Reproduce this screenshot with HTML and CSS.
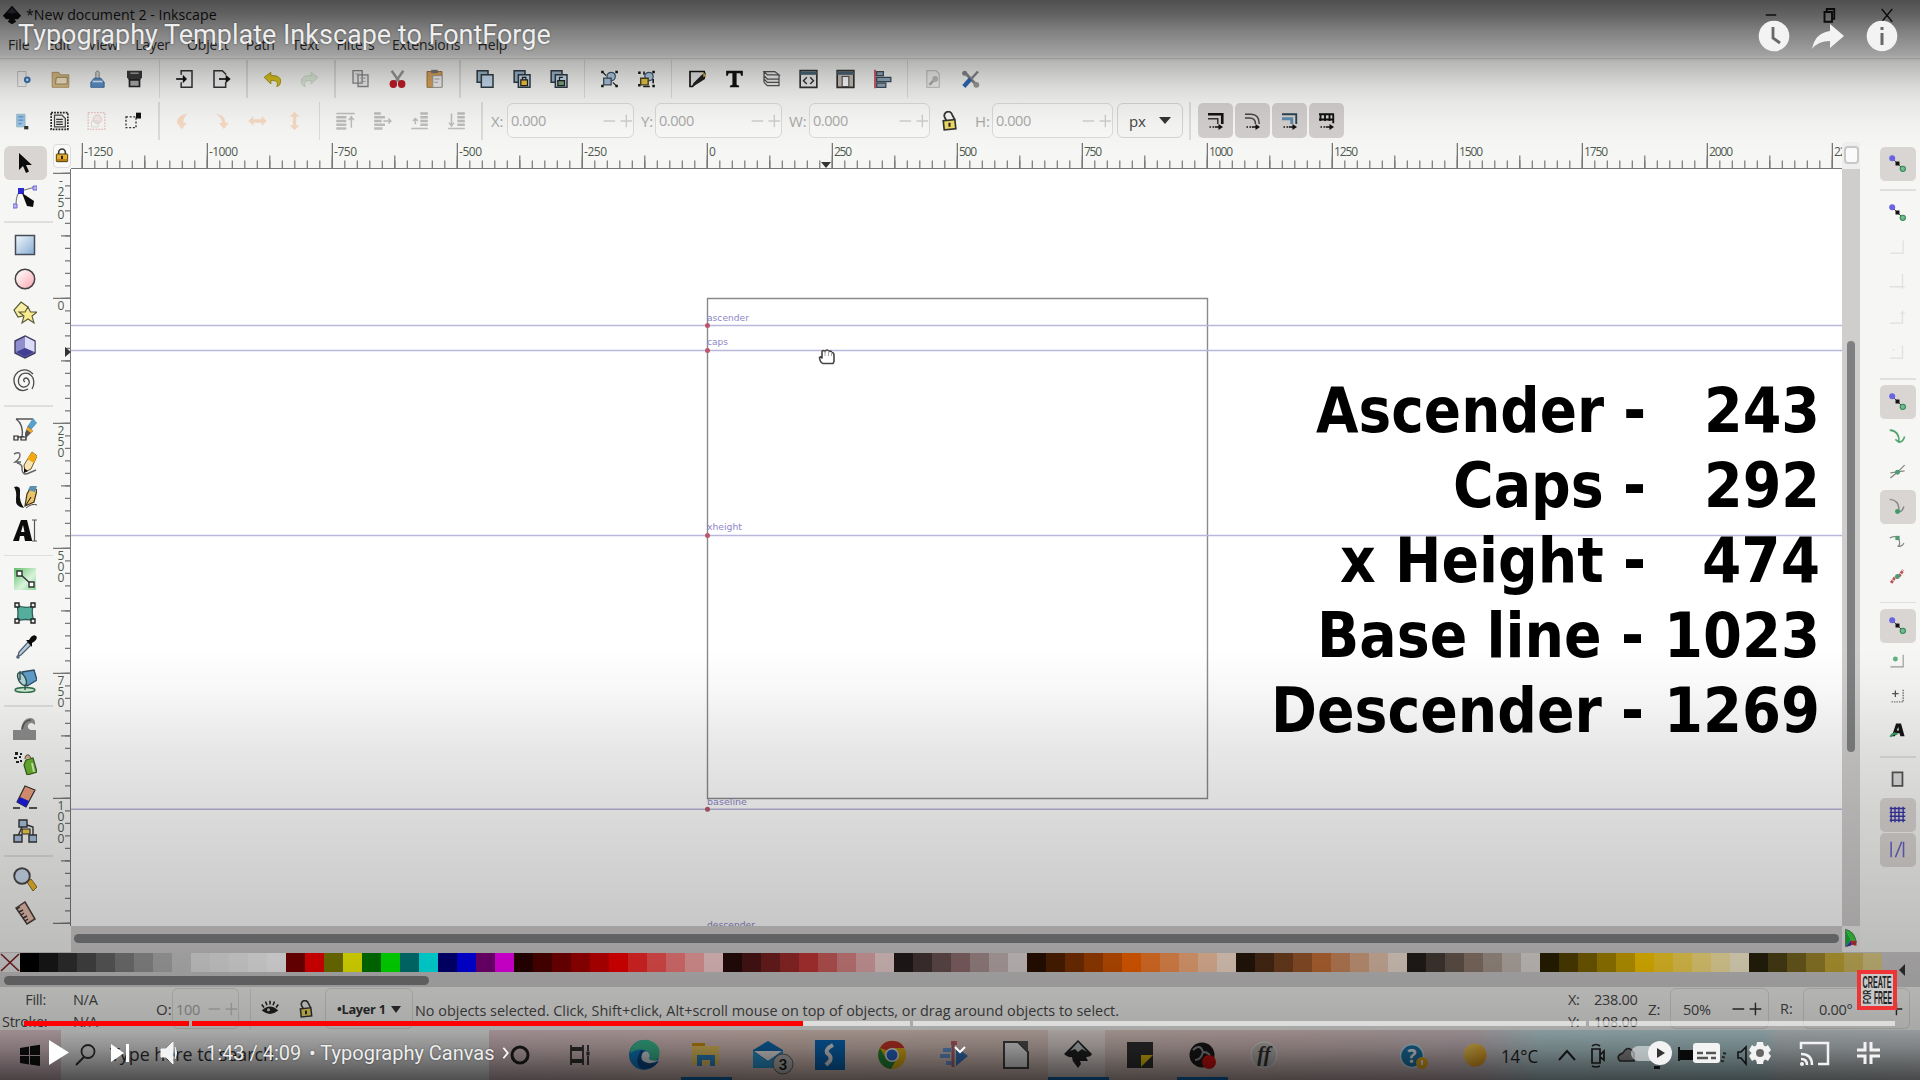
FILE: index.html
```html
<!DOCTYPE html>
<html lang="en">
<head>
<meta charset="utf-8">
<title>Typography Template Inkscape to FontForge</title>
<link rel="stylesheet" href="styles.css">
</head>
<body>
<svg class="defs" width="0" height="0">
  <defs>
    <linearGradient id="gBlue" x1="0" y1="0" x2="1" y2="1"><stop offset="0" stop-color="#f2f7fc"/><stop offset="1" stop-color="#86acd3"/></linearGradient>
    <linearGradient id="gPink" x1="0" y1="0" x2="1" y2="1"><stop offset="0.2" stop-color="#fff2f3"/><stop offset="1" stop-color="#fba5b0"/></linearGradient>
    <linearGradient id="gGreen" x1="0" y1="0" x2="1" y2="1"><stop offset="0" stop-color="#5fc06a"/><stop offset="0.6" stop-color="#d9f3db"/><stop offset="1" stop-color="#8ad692"/></linearGradient>
    <linearGradient id="gSun" x1="0" y1="0" x2="1" y2="1"><stop offset="0" stop-color="#ffe36b"/><stop offset="1" stop-color="#f39b10"/></linearGradient>
    <symbol id="snap" viewBox="0 0 24 24"><path d="M6 6l12 12" stroke="#444" stroke-width="1.4"/><circle cx="4.500" cy="4.500" r="4.200" fill="#6a63e2"/><rect x="9.200" y="9.200" width="5.600" height="5.600" fill="#111"/><circle cx="19.500" cy="19.500" r="3.700" fill="#77b891" stroke="#2f8a55" stroke-width="1.500"/></symbol>
    <symbol id="padlock" viewBox="0 0 24 24"><path d="M7 11V8a5 5 0 0 1 10 0v3" fill="none" stroke="#3a3a32" stroke-width="2.400"/><rect x="3.500" y="10.500" width="17" height="11.500" rx="1" fill="#e9ae2b" stroke="#4a3c14" stroke-width="1.500"/><path d="M4 18h16v3H4z" fill="#c07d12"/><path d="M12 13v5" stroke="#222" stroke-width="3"/></symbol>
    <symbol id="unlock" viewBox="0 0 24 24"><path d="M8 11L6 7a4 4 0 0 1 9-3l3 6" fill="none" stroke="#333" stroke-width="2.200"/><rect x="5" y="11" width="14" height="11" fill="#eedb62" stroke="#333" stroke-width="2" transform="rotate(-6 12 16)"/><path d="M12 14v5" stroke="#222" stroke-width="2.500"/></symbol>
    <symbol id="dup" viewBox="0 0 24 24"><path d="M2 2h13v14H2z" fill="#9fb7cc" stroke="#2f3b45" stroke-width="1.800"/><path d="M7 7h14v15H7z" fill="#c6dcf1" stroke="#2f3b45" stroke-width="1.800"/></symbol>
    <symbol id="arrowdots" viewBox="0 0 24 24"><path d="M4 20h2M8 20h2M11 20h6" stroke="#111" stroke-width="2"/><path d="M16 16l6 4-6 4z" fill="#111"/></symbol>
    <symbol id="plusminus" viewBox="0 0 36 20"><path d="M3 10h13M22 10h13M28.500 3v14" fill="none" stroke="currentColor" stroke-width="1.600"/></symbol>
  </defs>
</svg>

<div class="screen">
  <div class="app">
    <header class="titlebar">
      <svg class="logo" viewBox="0 0 24 24"><path d="M12 1L1 13l4 4h4l-2 3 5 3 5-3-2-3h4l4-4z" fill="#151515"/><path d="M12 3L6 10l4-1 2 2 2-2 4 1z" fill="#4b5563"/></svg>
      <span class="doc">*New document 2 - Inkscape</span>
      <span class="wins">
        <svg viewBox="0 0 24 24"><path d="M5 12h14" stroke="#222" stroke-width="2"/></svg>
        <svg viewBox="0 0 24 24"><path d="M6 8h10v13H6zM9 7V4h10v13h-3" fill="none" stroke="#1c1c1c" stroke-width="2.500"/></svg>
        <svg viewBox="0 0 24 24"><path d="M5 4l14 17M19 4L5 21" stroke="#1c1c1c" stroke-width="1.800"/></svg>
      </span>
    </header>
    <nav class="menu"><span>File</span><span>Edit</span><span>View</span><span>Layer</span><span>Object</span><span>Path</span><span>Text</span><span>Filters</span><span>Extensions</span><span>Help</span></nav>

    <div class="bar bar1">
      <svg viewBox="0 0 24 24"><path d="M5 3h10v18H5z" fill="#f5f5f5" stroke="#bbb"/><circle cx="16.500" cy="13" r="4" fill="#3b76b7"/><circle cx="16.500" cy="13" r="1.500" fill="#dbe9f7"/></svg>
      <svg viewBox="0 0 24 24"><path d="M2 4h8l2 3h10v15H2z" fill="#d9bc85" stroke="#a98d5c"/><path d="M7 10h13v8H6z" fill="#f2e3c2" stroke="#8d7a55"/></svg>
      <svg viewBox="0 0 24 24"><path d="M10 12V4l2-2 2 2v8" fill="#ddd" stroke="#777"/><path d="M4 22v-6l4-5h8l4 5v6z" fill="#5b8fc8" stroke="#33608f"/><path d="M6 15h12" stroke="#dbe9f7" stroke-width="2"/></svg>
      <svg viewBox="0 0 24 24"><path d="M3 2h18v8l-2 3H5l-2-3z" fill="#3a3a3a"/><path d="M7 5h10" stroke="#bbb" stroke-width="1.500"/><path d="M6 13h12v8H6z" fill="#aaa" stroke="#222" stroke-width="2"/></svg>
      <i class="sep"></i>
      <svg viewBox="0 0 24 24"><path d="M8 7V2h13v20H8v-6" fill="#f5f5f5" stroke="#333" stroke-width="1.800"/><path d="M2 12h9" stroke="#111" stroke-width="2"/><path d="M10 7l5 5-5 5z" fill="#111"/></svg>
      <svg viewBox="0 0 24 24"><path d="M17 7V6l-4-4H3v20h14v-6" fill="#f5f5f5" stroke="#333" stroke-width="1.800"/><path d="M9 12h9" stroke="#111" stroke-width="2"/><path d="M17 7l6 5-6 5z" fill="#111"/></svg>
      <i class="sep"></i>
      <svg viewBox="0 0 24 24"><path d="M2 10l8-6v4c8-1 14 3 11 10-1 2-2 3-4 3 3-5-1-8-7-7v4z" fill="#d9c31d" stroke="#9a8a10"/></svg>
      <svg class="dim" viewBox="0 0 24 24"><path d="M22 10l-8-6v4C6 7 0 11 3 18c1 2 2 3 4 3-3-5 1-8 7-7v4z" fill="#c5dfc0" stroke="#96b892"/></svg>
      <i class="sep"></i>
      <svg viewBox="0 0 24 24"><path d="M3 2h11v15H3zM9 7h12v14H9z" fill="#eee" stroke="#888" stroke-width="1.600"/><path d="M6 6h5M12 11h6M12 15h6" stroke="#aaa" stroke-width="1.400"/></svg>
      <svg viewBox="0 0 24 24"><path d="M5 2l9 13M19 2l-9 13" stroke="#999" stroke-width="3"/><ellipse cx="7" cy="18" rx="4.500" ry="4.800" fill="#c01c28"/><ellipse cx="17" cy="18" rx="4.500" ry="4.800" fill="#c01c28"/></svg>
      <svg viewBox="0 0 24 24"><path d="M3 3h18v19H3z" fill="#d9a35b" stroke="#8d6630"/><path d="M8 1h8v4H8z" fill="#777"/><path d="M10 8h11v14H10z" fill="#f2f2f2" stroke="#999"/><path d="M12 12h6M12 16h4" stroke="#999"/></svg>
      <i class="sep"></i>
      <svg viewBox="0 0 24 24"><use href="#dup"/></svg>
      <svg viewBox="0 0 24 24"><use href="#dup"/><path d="M10 13h8v7h-8z" fill="#f0c83a" stroke="#222" stroke-width="1.500"/><path d="M12 13v-3h4v3" fill="none" stroke="#222" stroke-width="1.500"/></svg>
      <svg viewBox="0 0 24 24"><use href="#dup"/><path d="M10 14h8v6h-8z" fill="#76a57a" stroke="#222" stroke-width="1.500"/><path d="M12 14v-4h4" fill="none" stroke="#222" stroke-width="1.500"/></svg>
      <i class="sep"></i>
      <svg viewBox="0 0 24 24"><path d="M2 2h3v3H2zM19 2h3v3h-3zM2 19h3v3H2zM19 19h3v3h-3z" fill="#111"/><circle cx="14" cy="9" r="5" fill="#b5cde4" stroke="#3c5870" stroke-width="1.500"/><path d="M5 11h9v8H5z" fill="#a9c4de" stroke="#3c4c5a" stroke-width="1.500"/><path d="M4 4l4 4M20 20l-4-4" stroke="#222" stroke-width="1.500"/></svg>
      <svg viewBox="0 0 24 24"><path d="M2 3h3v3H2zM19 2h3v3h-3zM2 18h3v3H2zM19 19h3v3h-3z" fill="#111"/><circle cx="15" cy="9" r="5" fill="#b5cde4" stroke="#3c5870" stroke-width="1.500"/><path d="M5 11h9v8H5z" fill="#e9c545" stroke="#4c4424" stroke-width="1.700"/><path d="M9 3v4M20 12v5M8 21h8" stroke="#222" stroke-width="2"/></svg>
      <i class="sep"></i>
      <svg viewBox="0 0 24 24"><path d="M3 3h17v3L6 21H3z" fill="#e8e8e8" stroke="#111" stroke-width="2"/><path d="M22 4l-1 8-8 5-8 5 2-5 9-9z" fill="#222"/><path d="M19 3l3 5-3 2z" fill="#e5b63a"/></svg>
      <svg viewBox="0 0 24 24"><path d="M2 2h20v6h-2l-1-3h-4.500v14l3 1v2H6.500v-2l3-1V5H5L4 8H2z" fill="#111"/></svg>
      <svg viewBox="0 0 24 24"><path d="M3 3h13l5 4H7zM3 8l4 4h14M3 12l4 4h14M3 16l4 4h14V7M3 3v13" fill="#eee" stroke="#555" stroke-width="1.500"/></svg>
      <svg viewBox="0 0 24 24"><path d="M2 2h20v20H2z" fill="#eee" stroke="#333" stroke-width="2"/><path d="M2 5h20" stroke="#4c6579" stroke-width="4"/><path d="M10 10l-4 4 4 4M14 10l4 4-4 4" fill="none" stroke="#333" stroke-width="1.700"/></svg>
      <svg viewBox="0 0 24 24"><path d="M2 2h20v20H2z" fill="#c5c0b5" stroke="#333" stroke-width="2"/><path d="M2 5h20" stroke="#4c6579" stroke-width="4"/><path d="M8 9h8v12H8z" fill="#fff" stroke="#555" stroke-width="1.400"/></svg>
      <svg viewBox="0 0 24 24"><path d="M3 1v22" stroke="#c3424c" stroke-width="2"/><path d="M5 3h8v5H5zM5 10h17v5H5zM5 17h11v5H5z" fill="#8fa9bd" stroke="#3c4c5a" stroke-width="1.500"/></svg>
      <i class="sep"></i>
      <svg class="dim" viewBox="0 0 24 24"><path d="M4 2h11l4 4v16H4z" fill="#eee" stroke="#999" stroke-width="1.500"/><path d="M7 19l7-7" stroke="#666" stroke-width="3"/><circle cx="14" cy="12" r="3.500" fill="#888"/></svg>
      <svg viewBox="0 0 24 24"><path d="M6 5l12 13" stroke="#888" stroke-width="3.500"/><circle cx="5" cy="5" r="3" fill="#888"/><circle cx="19" cy="19" r="3.500" fill="#999"/><path d="M21 3L11 14" stroke="#8a8a8a" stroke-width="3"/><path d="M12 12l-8 9" stroke="#2f66b5" stroke-width="5"/></svg>
    </div>

    <div class="bar bar2">
      <svg viewBox="0 0 24 24"><path d="M5 4h10v15H5z" fill="#9fc3e6" stroke="#8bb"/><path d="M7 7h6M7 11h6M7 15h4" stroke="#5b8fc8" stroke-width="1.500"/><path d="M14 18h5v4h-5z" fill="#333"/></svg>
      <svg viewBox="0 0 24 24"><path d="M2 2h20v20H2z" fill="none" stroke="#222" stroke-width="2" stroke-dasharray="2.200 1.300"/><path d="M6 5h9l4 4v10H6z" fill="#eee" stroke="#444" stroke-width="1.500"/><path d="M8 10h8M8 13h8M8 16h8" stroke="#333" stroke-width="1.500"/></svg>
      <svg class="dim" viewBox="0 0 24 24"><path d="M2 2h20v20H2z" fill="none" stroke="#d88" stroke-width="1.500" stroke-dasharray="2 1.500"/><circle cx="13" cy="10" r="5" fill="#f3dada" stroke="#c99"/><path d="M6 12h8v7H6z" fill="none" stroke="#bbb"/></svg>
      <svg viewBox="0 0 24 24"><path d="M3 7h12v13H3z" fill="none" stroke="#333" stroke-width="1.600" stroke-dasharray="2.400 2"/><path d="M15 2h6v7h-6z" fill="#111"/></svg>
      <i class="sep"></i>
      <svg class="peach" viewBox="0 0 24 24"><path d="M4 14q0-9 14-11-7 4-6 11h4l-6 8-6-8z"/></svg>
      <svg class="peach" viewBox="0 0 24 24"><path d="M5 3q13 2 13 11h4l-6 8-6-8h4q0-7-9-11z"/></svg>
      <svg class="peach" viewBox="0 0 24 24"><path d="M1 12l6-6v4h10V6l6 6-6 6v-4H7v4z"/></svg>
      <svg class="peach" viewBox="0 0 24 24"><path d="M12 1l6 6h-4v10h4l-6 6-6-6h4V7H6z"/></svg>
      <i class="sep"></i>
      <svg class="lines" viewBox="0 0 24 24"><path d="M1 3h22"/><path class="wide" d="M1 7.500h12M1 12h12M1 16.500h12M1 21h12"/><path d="M19 20V8M16 11l3-4 3 4"/></svg>
      <svg class="lines" viewBox="0 0 24 24"><path class="wide" d="M2 3h8M2 7.500h13M2 12h9M2 16.500h13M2 21h10"/><path d="M13 12h9M19 9l3 3-3 3"/></svg>
      <svg class="lines" viewBox="0 0 24 24"><path class="wide" d="M13 3h9M13 7.500h9M13 12h9M13 16.500h9"/><path d="M2 21h20M7 16V9M4 12l3-3 3 3"/></svg>
      <svg class="lines" viewBox="0 0 24 24"><path class="wide" d="M13 3h9M13 7.500h9M13 12h9M13 16.500h9"/><path d="M2 21h20M6 3v14M3 14l3 4 3-4"/></svg>
      <i class="sep"></i>
      <label class="l1">X:</label><div class="num n1">0.000<svg><use href="#plusminus"/></svg></div>
      <label class="l2">Y:</label><div class="num n1">0.000<svg><use href="#plusminus"/></svg></div>
      <label class="l3">W:</label><div class="num n2">0.000<svg><use href="#plusminus"/></svg></div>
      <svg class="tlock" viewBox="0 0 24 24"><use href="#unlock"/></svg>
      <label class="l4">H:</label><div class="num n3">0.000<svg><use href="#plusminus"/></svg></div>
      <div class="unit">px<b class="tri"></b></div>
      <i class="sep slim"></i>
      <div class="toggles">
        <span><svg viewBox="0 0 24 24"><path d="M2 3h19v13" fill="none" stroke="#111" stroke-width="3.500"/><path d="M2 9h13v7" fill="none" stroke="#333" stroke-width="2"/><use href="#arrowdots"/></svg></span>
        <span><svg viewBox="0 0 24 24"><path d="M2 3h8q11 0 11 13M2 8h6q8 0 8 8" fill="none" stroke="#444" stroke-width="2"/><use href="#arrowdots"/></svg></span>
        <span><svg viewBox="0 0 24 24"><path d="M2 3h19v13" fill="none" stroke="#2c4252" stroke-width="2.500"/><path d="M2 9h13v7" fill="none" stroke="#5d89ac" stroke-width="4"/><use href="#arrowdots"/></svg></span>
        <span><svg viewBox="0 0 24 24"><path d="M2 3h20M2 10h20M4 3v9M10 3v9M16 3v9M21 3v12" fill="none" stroke="#111" stroke-width="2.500"/><use href="#arrowdots"/></svg></span>
      </div>
    </div>

    <main class="work">
      <aside class="tools">
        <span class="on"><svg viewBox="0 0 24 24"><path d="M6 2v17l4-4 3 7 3-1.500-3-6.500h6z" fill="#0b0b0b"/></svg></span>
        <span><svg viewBox="0 0 24 24"><path d="M3 20Q3 8 8 6l14-4" fill="none" stroke="#777" stroke-width="1.200"/><path d="M5 3h6v6H5z" fill="#2d2bd0"/><path d="M20 1h4v4h-4zM0 19h4v4H0z" fill="#b9b6ee" stroke="#6c67d8"/><path d="M9 8l12 8-1 6-6-1z" fill="#0b0b0b"/></svg></span>
        <i></i>
        <span><svg viewBox="0 0 24 24"><path d="M2.500 2.500h19v19h-19z" fill="url(#gBlue)" stroke="#444c55" stroke-width="1.500"/></svg></span>
        <span><svg viewBox="0 0 24 24"><circle cx="12" cy="12" r="9.700" fill="url(#gPink)" stroke="#444" stroke-width="1.500"/></svg></span>
        <span><svg viewBox="0 0 24 24"><path d="M8 1l7 5-1 8-9 2-4-7z" fill="#f6eea4" stroke="#5b5838" stroke-width="1.200"/><path d="M15 6l2.500 5 6.500 0-5 4 2 7-6-4-6 4 2-7-5-4h6z" fill="#f8ec8e" stroke="#5b5838" stroke-width="1.100"/></svg></span>
        <span><svg viewBox="0 0 24 24"><path d="M12 1l10 5v12l-10 5-10-5V6z" fill="#8f8dcd" stroke="#3b3a60" stroke-width="1.400"/><path d="M12 1.500l9.500 5V17L12 13z" fill="#dcdcf6"/><path d="M12 13l9 4-9 5-9-5z" fill="#403f94"/></svg></span>
        <span><svg viewBox="0 0 24 24"><path d="M12 13q-2-1-1-3 2-2 4 0 3 4-1 7-5 3-8-2-2-6 3-10 7-3 11 4 2 6-1 11M15 20q-7 4-12-2-5-9 2-15 8-5 15 2" fill="none" stroke="#4a4a4a" stroke-width="1.300"/></svg></span>
        <i></i>
        <span><svg viewBox="0 0 24 24"><path d="M3 2h17M3 2q8 5 6 19M1 20h10" fill="none" stroke="#555" stroke-width="1.400"/><path d="M1 19h4v4H1zM8 20h5v3H8z" fill="#eee" stroke="#222" stroke-width="1.200"/><path d="M20 1l4 5-7 8-3-4z" fill="#58a0c8"/><path d="M15 9l5 5-8 8 0-6z" fill="#555"/><path d="M14 11l5 4" stroke="#e7a72e" stroke-width="3"/></svg></span>
        <span><svg viewBox="0 0 24 24"><path d="M1 3q6-3 6 1 0 4-5 7h6M4 12q6 1 5 7 1 6 7 3l7-3" fill="none" stroke="#666" stroke-width="1.400"/><path d="M19 1l5 4-6 13-6 3-1-7z" fill="#f7e6b4" stroke="#6b5524"/><path d="M19 1l5 4-3 7-7-4z" fill="#f4a814"/><path d="M11 17l4 3-4 2z" fill="#111"/></svg></span>
        <span><svg viewBox="0 0 24 24"><path d="M1 2q7-2 6 6-1 8 4 15-9-1-8-9Q4 6 1 2z" fill="#111"/><path d="M18 2l6 3-3 12-9 4 2-12z" fill="#eac36a" stroke="#443414" stroke-width="1.200"/><path d="M17 1h7l-2 6-7-2z" fill="#5d8fae"/><path d="M13 20l5-8" stroke="#111"/><path d="M13 23q6-5 11-3" fill="none" stroke="#444"/></svg></span>
        <span><svg viewBox="0 0 24 24"><path d="M8 1h6l5 20v1h-7l-1-5H7l-1 5H0zM10 6l-2 7h3.500z" fill="#0b0b0b" fill-rule="evenodd"/><path d="M19 1h5M21.500 1v21M19 22h5" stroke="#555" stroke-width="1.200"/></svg></span>
        <i></i>
        <span><svg viewBox="0 0 24 24"><path d="M1 1h22v22H1z" fill="url(#gGreen)"/><path d="M6 6l13 12" stroke="#333" stroke-width="1.400"/><path d="M4 4h5v5H4zM16 15h5v5h-5z" fill="#fff" stroke="#333" stroke-width="1.400"/></svg></span>
        <span><svg viewBox="0 0 24 24"><path d="M4 4q8 4 16 1-2 7 1 15-8-3-17 0 2-8 0-16z" fill="#54ae9b" stroke="#2c5a58" stroke-width="1.300"/><path d="M2 2h4v4H2zM18 2h4v4h-4zM2 18h4v4H2zM18 18h4v4h-4z" fill="#eee" stroke="#222" stroke-width="1.400"/></svg></span>
        <span><svg viewBox="0 0 24 24"><path d="M15 7l3 3L8 20l-3 1 1-4z" fill="#b9cadd" stroke="#4b5868" stroke-width="1.200"/><circle cx="5" cy="22" r="1.800" fill="#54657c"/><path d="M13 5l3 0 2-3q3-3 5-1 2 2-1 5l-3 2 0 4z" fill="#0b0b0b"/></svg></span>
        <span><svg viewBox="0 0 24 24"><ellipse cx="12" cy="21" rx="10" ry="2.500" fill="#cfe9d3" stroke="#2f6f4d" stroke-width="1.400"/><path d="M9 3l12-2 3 10-10 6z" fill="#5e9dc9" stroke="#2b4a60" stroke-width="1.300"/><ellipse cx="9" cy="10" rx="3.500" ry="7" transform="rotate(-28 9 10)" fill="#b6d3dc" stroke="#2b5648" stroke-width="1.400"/><path d="M12 16v5M7 2v9" stroke="#2b4a45" stroke-width="1.300"/></svg></span>
        <i></i>
        <span><svg viewBox="0 0 24 24"><path d="M0 13h8q1-12 10-12 5 1 4 7-4-4-7 0-1 4 3 5h5v10H0z" fill="#8d8d8d"/><path d="M9 12Q11 3 18 3" fill="none" stroke="#555" stroke-width="1.500"/></svg></span>
        <span><svg viewBox="0 0 24 24"><path d="M2 1h3v3H2zM6 5h2v2H6zM1 6h3v2H1zM3 10h3v2H3zM7 9h2v2H7zM7 2h2v2H7z" fill="#222"/><path d="M13 9l7-2 4 14-10 3-3-10z" fill="#6bb52f" stroke="#375f1a" stroke-width="1.200"/><path d="M12 8q0-5 4-4l2 3" fill="#d8b184" stroke="#555"/><path d="M19 12l2 9" stroke="#d5f2b8" stroke-width="2"/></svg></span>
        <span><svg viewBox="0 0 24 24"><path d="M12 1l10 4-9 17-9-5z" fill="#ee9f7c" stroke="#333" stroke-width="1.200"/><path d="M7 12l9 4-3 6-9-5z" fill="#1c1ce0"/><path d="M0 23h7M16 23h8" stroke="#222" stroke-width="1.300"/></svg></span>
        <span><svg viewBox="0 0 24 24"><path d="M9 8L5 17M14 6l6 2v9" fill="none" stroke="#333" stroke-width="1.400"/><path d="M6 1h8v7H6zM1 16h8v7H1zM16 16h8v7h-8z" fill="#a7c0dd" stroke="#333" stroke-width="1.400"/><path d="M9 10h8v5H9z" fill="#f3c948" stroke="#333" stroke-width="1.200"/></svg></span>
        <i></i>
        <span><svg viewBox="0 0 24 24"><path d="M14 15l4-3 6 8-4 4z" fill="#edb531" stroke="#8d6b1a"/><circle cx="9" cy="9" r="7.800" fill="#cddcee" stroke="#4a4a4a" stroke-width="1.900"/></svg></span>
        <span><svg viewBox="0 0 24 24"><path d="M3 7l9-6 10 17-8 5z" fill="#e9bfae" stroke="#4b3f3b" stroke-width="1.500"/><path d="M4 8l3-2M6 11l4-2M8 14l3-2M10 17l4-2M12 20l3-2" stroke="#333" stroke-width="1.400"/></svg></span>
      </aside>

      <div class="corner"><svg viewBox="0 0 24 24"><use href="#padlock"/></svg></div>

      <svg class="hruler" viewBox="0 0 1771 27">
        <path d="M-14.300 22.500H1771" class="tk" stroke-width="8" stroke-dasharray="1.200 11.300"/>
        <path d="M-51.800 20H1771" class="tk" stroke-width="13" stroke-dasharray="1.200 61.300"/>
        <path d="M10.700 13.500H1771" class="tk" stroke-width="25" stroke-dasharray="1.300 123.700"/>
        <path d="M0 26.500H1771" stroke="#777" stroke-width="1"/>
        <g class="rl">
          <text x="13" y="14" textLength="29">-1250</text><text x="138" y="14" textLength="29">-1000</text><text x="263" y="14" textLength="23">-750</text><text x="388" y="14" textLength="23">-500</text><text x="513" y="14" textLength="23">-250</text>
          <text x="638" y="14">0</text><text x="763" y="14" textLength="18">250</text><text x="888" y="14" textLength="18">500</text><text x="1013" y="14" textLength="18">750</text>
          <text x="1138" y="14" textLength="24">1000</text><text x="1263" y="14" textLength="24">1250</text><text x="1388" y="14" textLength="24">1500</text><text x="1513" y="14" textLength="24">1750</text><text x="1638" y="14" textLength="24">2000</text><text x="1763" y="14" textLength="24">2250</text>
        </g>
        <path d="M750 20h10l-5 6z" fill="#333"/>
      </svg>

      <svg class="vruler" viewBox="0 0 18 757">
        <path d="M15 -8.700V757" class="tk" stroke-width="6" stroke-dasharray="1.200 11.300"/>
        <path d="M13 -58.700V757" class="tk" stroke-width="10" stroke-dasharray="1.200 61.300"/>
        <path d="M9 3.800V757" class="tk" stroke-width="18" stroke-dasharray="1.300 123.700"/>
        <path d="M17.500 0V757" stroke="#777"/>
        <g class="rl mid">
          <text x="8" y="16">-</text><text x="8" y="27">2</text><text x="8" y="38">5</text><text x="8" y="50">0</text>
          <text x="8" y="141">0</text>
          <text x="8" y="266">2</text><text x="8" y="277">5</text><text x="8" y="288">0</text>
          <text x="8" y="391">5</text><text x="8" y="402">0</text><text x="8" y="413">0</text>
          <text x="8" y="516">7</text><text x="8" y="527">5</text><text x="8" y="538">0</text>
          <text x="8" y="641">1</text><text x="8" y="652">0</text><text x="8" y="663">0</text><text x="8" y="674">0</text>
        </g>
        <path d="M12 178v10l6-5z" fill="#333"/>
      </svg>

      <svg class="canvas" viewBox="71 169 1771 757">
        <path d="M707.500 298.500h500v500h-500z" fill="none" stroke="#8a8a8a" stroke-width="1.400"/>
        <g class="guides"><path d="M71 325.500H1842M71 350.500H1842M71 535.500H1842M71 809.300H1842"/></g>
        <g class="dots"><circle cx="707.500" cy="325.500" r="2.500"/><circle cx="707.500" cy="350.500" r="2.500"/><circle cx="707.500" cy="535.500" r="2.500"/><circle cx="707.500" cy="809.300" r="2.500"/></g>
        <g class="glabel">
          <text x="707" y="321" textLength="42" lengthAdjust="spacingAndGlyphs">ascender</text><text x="707" y="345" textLength="21" lengthAdjust="spacingAndGlyphs">caps</text><text x="707" y="530" textLength="35" lengthAdjust="spacingAndGlyphs">xheight</text><text x="707" y="805" textLength="40" lengthAdjust="spacingAndGlyphs">baseline</text><text x="707" y="928" textLength="48" lengthAdjust="spacingAndGlyphs">descender</text>
        </g>
        <path d="M819.500 357.500l2-1 .5 2v-7q1-2 3 0 2-3 4 0 2-1 3 1 2 0 2 3v6l-1 2h-10q-3-1-3.500-6z" fill="#fff" stroke="#444" stroke-width="1.600"/>
        <path d="M825 351v5M828.500 351v5M831.500 352v4" stroke="#aaa"/>
        <g class="big">
          <text x="1316" y="431.700" textLength="330" lengthAdjust="spacingAndGlyphs">Ascender -</text><text x="1704" y="431.700" textLength="116" lengthAdjust="spacingAndGlyphs">243</text>
          <text x="1453" y="506.700" textLength="193" lengthAdjust="spacingAndGlyphs">Caps -</text><text x="1704" y="506.700" textLength="116" lengthAdjust="spacingAndGlyphs">292</text>
          <text x="1340" y="581.700" textLength="306" lengthAdjust="spacingAndGlyphs">x Height -</text><text x="1702" y="581.700" textLength="118" lengthAdjust="spacingAndGlyphs">474</text>
          <text x="1317" y="656.700" textLength="327" lengthAdjust="spacingAndGlyphs">Base line -</text><text x="1664" y="656.700" textLength="156" lengthAdjust="spacingAndGlyphs">1023</text>
          <text x="1271" y="731.700" textLength="373" lengthAdjust="spacingAndGlyphs">Descender -</text><text x="1664" y="731.700" textLength="156" lengthAdjust="spacingAndGlyphs">1269</text>
        </g>
      </svg>

      <div class="vend"><b></b></div>
      <div class="vscroll"><b></b></div>
      <div class="hscroll"><b></b></div>
      <div class="wheel"><svg viewBox="0 0 16 22"><path d="M3 3v16l5-6z" fill="#17b53c"/><path d="M3 3q8 1 10 11l-5-1z" fill="#36d23c"/><path d="M13 14l-5-1-1 4 6 1z" fill="#d92d2d"/><path d="M3 19l5-6 0 5z" fill="#3737d9"/><path d="M3 3v16l10-4Q11 5 3 3z" fill="none" stroke="#555" stroke-width=".6"/></svg></div>

      <aside class="snaps">
        <span class="on"><svg viewBox="0 0 24 24"><use href="#snap"/></svg></span>
        <i></i>
        <span><svg viewBox="0 0 24 24"><use href="#snap"/></svg></span>
        <span class="faint"><svg viewBox="0 0 24 24"><path d="M20 2v18H2"/></svg></span>
        <span class="faint"><svg viewBox="0 0 24 24"><path d="M19 0v21M1 18h21"/></svg></span>
        <span class="faint"><svg viewBox="0 0 24 24"><path d="M19 2v18H1M16 6h6"/></svg></span>
        <span class="faint"><svg viewBox="0 0 24 24"><path d="M19 2v18H1M5 8h3"/></svg></span>
        <i></i>
        <span class="on"><svg viewBox="0 0 24 24"><use href="#snap"/></svg></span>
        <span><svg viewBox="0 0 24 24"><path d="M1 3q14 1 13 17M9 16l5 4q6 0 8-8" fill="none" stroke="#4fa46c" stroke-width="2.200"/></svg></span>
        <span><svg viewBox="0 0 24 24"><path d="M2 21Q12 14 22 3M2 14l20-3" fill="none" stroke="#888" stroke-width="1.800"/><circle cx="12" cy="13" r="3.500" fill="#4f9b72"/></svg></span>
        <span class="on"><svg viewBox="0 0 24 24"><path d="M1 2q14 1 13 16M12 20q7 0 9-8" fill="none" stroke="#888" stroke-width="2"/><circle cx="12" cy="19" r="3.500" fill="#3f9b68"/></svg></span>
        <span><svg viewBox="0 0 24 24"><path d="M1 7q13-6 14 7 0 5-3 5 7 0 9-5" fill="none" stroke="#888" stroke-width="1.700"/><path d="M9 4h6v6H9z" fill="#4f9b72"/></svg></span>
        <span><svg viewBox="0 0 24 24"><path d="M3 21l5-7 6-2 6-9" fill="none" stroke="#b55" stroke-width="4" stroke-dasharray="4 1"/><circle cx="12" cy="12" r="3.500" fill="#4f9b72"/></svg></span>
        <i></i>
        <span class="on"><svg viewBox="0 0 24 24"><use href="#snap"/></svg></span>
        <span><svg viewBox="0 0 24 24"><path d="M20 4v17H2" fill="none" stroke="#999" stroke-width="1.600"/><circle cx="9" cy="10" r="3.500" fill="#5fb083"/></svg></span>
        <span><svg viewBox="0 0 24 24"><path d="M20 4v17H2" fill="none" stroke="#777" stroke-width="2" stroke-dasharray="2 1.500"/><path d="M9 5v9M4.500 9.500h9" stroke="#555" stroke-width="1.800"/></svg></span>
        <span><svg viewBox="0 0 24 24"><path d="M10 2h7l5 18h-6l-1-4h-4l-3 4H4zM13 7l-2 5h3z" fill="#151515" fill-rule="evenodd"/><path d="M2 21q3-6 10-4" fill="none" stroke="#3f9b68" stroke-width="3"/></svg></span>
        <i></i>
        <span><svg viewBox="0 0 24 24"><path d="M5 2h14v19H5z" fill="#ddd" stroke="#555" stroke-width="2.500"/></svg></span>
        <span class="on"><svg viewBox="0 0 24 24"><path d="M3 1v22M8.500 1v22M14 1v22M20 1v22M1 3.500h22M1 9h22M1 14.500h22M1 20h22" stroke="#3937a8" stroke-width="2"/></svg></span>
        <span class="on"><svg viewBox="0 0 24 24"><path d="M3 1v22M9 23L18 1M20.500 1v22" fill="none" stroke="#6863c4" stroke-width="2.200"/></svg></span>
      </aside>
    </main>

    <div class="palette">
      <div class="swatches" id="swatches"><svg class="none" viewBox="0 0 20 19"><path d="M1 1l18 17M19 1L1 18" stroke="#7a2020" stroke-width="1.600"/></svg></div>
      <div class="pthumb"></div>
      <b class="pmenu"></b>
    </div>

    <footer class="status">
      <div class="fs"><span>Fill:</span><span>N/A</span><span>Stroke:</span><span>N/A</span></div>
      <span class="olab">O:</span>
      <div class="box obox"><em>100</em><svg><use href="#plusminus"/></svg></div>
      <i class="vsep"></i>
      <svg class="eye" viewBox="0 0 24 24"><path d="M1 14Q12 3 23 14 12 23 1 14z" fill="#222"/><path d="M4 10L1 6M8 7L6 2M12 6V1M16 7l2-5M20 10l3-4" stroke="#222" stroke-width="2"/><circle cx="10" cy="13" r="2" fill="#ddd"/></svg>
      <svg class="slock" viewBox="0 0 24 24"><use href="#unlock"/></svg>
      <div class="box layer">•Layer 1<b class="tri"></b></div>
      <svg class="msg" viewBox="0 0 1145 40"><text x="2" y="27" textLength="704" lengthAdjust="spacingAndGlyphs">No objects selected. Click, Shift+click, Alt+scroll mouse on top of objects, or drag around objects to select.</text></svg>
      <div class="xy"><span>X:</span><span>238.00</span><span>Y:</span><span>108.00</span></div>
      <span class="zlab">Z:</span>
      <div class="box zbox"><em>50%</em><svg><use href="#plusminus"/></svg></div>
      <span class="rlab">R:</span>
      <div class="box rbox"><em>0.00°</em><svg><use href="#plusminus"/></svg></div>
    </footer>

    <div class="taskbar">
      <svg viewBox="0 0 1920 50">
        <path d="M61 0h428v50H61z" fill="#f7f7f7"/>
        <path d="M20 18l9-1.500V25h-9zM30 16.300l10-1.600V25H30zM20 26h9v8.500L20 33zM30 26h10v10l-10-1.600z" fill="#111"/>
        <circle cx="88" cy="21.500" r="6.500" fill="none" stroke="#333" stroke-width="1.800"/><path d="M84 27l-8 8" stroke="#333" stroke-width="2"/>
        <text x="110" y="31" class="srch" textLength="164" lengthAdjust="spacingAndGlyphs">Type here to search</text>
        <circle cx="520" cy="25" r="8" fill="none" stroke="#222" stroke-width="3"/>
        <path d="M571 15v3h12v-3M571 35v-3h12v3M571 20h12v10h-12zM588 15v6M588 26v9" fill="none" stroke="#333" stroke-width="1.800"/><path d="M586.500 21.500h3v4h-3z" fill="#333"/>
        <circle cx="644" cy="25" r="15" fill="#1187d4"/><path d="M630 20Q636 8 648 10q14 4 11 17-3 5-10 4 4-8-4-11-8-2-14 3z" fill="#3fcb9c"/><path d="M641 20q7 1 5 9 4 7 13 2-6 9-17 8-9-6-1-19z" fill="#0d4d93"/><path d="M642 24q-3 7 6 9 6 1 11-3-6 2-10-1 2-4-1-7-4-2-6 2z" fill="#e8f3f8"/>
        <path d="M692 13h13v5h-13z" fill="#d99a12"/><path d="M692 16h27v19h-27z" fill="#f8d365"/><path d="M697 36V25h18v11h-5v-6h-8v6z" fill="#2f8fd6"/>
        <path d="M753 20l15-9 15 9v15h-30z" fill="#1173bd"/><path d="M754 21h28l-14 10z" fill="#fff"/><path d="M753 21l15 11 15-11v17h-30z" fill="#2ea3e0"/><circle cx="783" cy="34" r="10" fill="#c9c9c9" stroke="#666"/><text x="783" y="39.500" class="badge">3</text>
        <path d="M815 10h30v30h-30z" fill="#0a6ec4"/><path d="M833 15q-8 4-6 8 5 3 3 8l-4 4" fill="none" stroke="#eee" stroke-width="4"/>
        <circle cx="892" cy="25" r="14" fill="#f2bc16"/><path d="M880 18A14 14 0 0 1 904.500 18H892v4z" fill="#d53a2c"/><path d="M880 18a14 14 0 0 0 11 21l5-9-9 0z" fill="#27903f"/><circle cx="892" cy="25" r="7" fill="#fff"/><circle cx="892" cy="25" r="5.500" fill="#2a6fdc"/>
        <path d="M943 20h8M940 26h10M946 33h6" stroke="#6aa0e6" stroke-width="4"/><path d="M951 11h6v4h-6z" fill="#e06060"/><path d="M953 12v25" stroke="#b06d77" stroke-width="3"/><path d="M956 17l12 9-12 10z" fill="#3b7ec9"/>
        <path d="M1004 12h14l10 10v16h-24z" fill="#f3f3f3" stroke="#444" stroke-width="2"/><path d="M1018 11h10v10z" fill="#555"/>
        <path d="M1048 0h57v50h-57z" fill="#f5eff0" opacity=".65"/><path d="M1078 10l-14 14q5 4 8 3 0 4 3 7l3 4 3-4-1-3h8l-2-4q5 0 6-3z" fill="#222"/><path d="M1078 12l-8 9 5-2 3 3 4-3 5 3z" fill="#c9d0d4"/>
        <path d="M1127 12h26v26h-26z" fill="#333"/><path d="M1141 25h12l-12 12z" fill="#f5cf0c"/>
        <circle cx="1202" cy="25" r="12.500" fill="#1a1a1a"/><path d="M1193 20q7-7 10 2M1203 22q8 0 7 8M1203 22q-2 8-8 8" fill="none" stroke="#999" stroke-width="2"/><circle cx="1209" cy="32" r="7" fill="#e01111"/>
        <circle cx="1264" cy="25" r="13" fill="#c9c4c1" stroke="#eee"/><text x="1264" y="31" class="ff">ff</text>
        <circle cx="1412" cy="26" r="11.500" fill="#1f7fb8" stroke="#d5eef5" stroke-width="1.500"/><text x="1412" y="33" class="q">?</text><circle cx="1422" cy="33" r="6" fill="#f5b51c"/><path d="M1422 30v5" stroke="#fff" stroke-width="2"/>
        <circle cx="1475" cy="25" r="11.500" fill="url(#gSun)"/>
        <text x="1501" y="33" class="temp" textLength="37" lengthAdjust="spacingAndGlyphs">14°C</text>
        <path d="M1559 30l8-9 8 9" fill="none" stroke="#222" stroke-width="2"/>
        <path d="M1592 19h8v14h-8zM1600 25l4-4v9l-4-3M1592 16q4-3 8 0M1592 36q4 2 8 0" fill="none" stroke="#222" stroke-width="1.700"/>
        <path d="M1620 31q-5-5 3-8 5-9 11 0v8z" fill="#999" stroke="#333" stroke-width="1.500"/>
        <path d="M1654 36h6v3h-6z" fill="#222"/>
        <path d="M1680 20h14v10h-14z" fill="#111"/><path d="M1679 17v14" stroke="#222" stroke-width="2"/><path d="M1722 32l3-10" stroke="#444" stroke-width="3" stroke-dasharray="2 2"/>
        <path d="M1738 22h3l5-5v17l-5-6h-3z" fill="none" stroke="#222" stroke-width="1.600"/>
        <path d="M681 47h51v3h-51zM1048 47h61v3h-61zM1177 47h51v3h-51z" fill="#1479cc"/>
      </svg>
    </div>
  </div>

  <div class="shade-top"></div>
  <div class="shade-bottom"></div>

  <div class="player">
    <div class="ptop">
      <h1>Typography Template Inkscape to FontForge</h1>
      <svg class="acts" viewBox="0 0 150 40">
        <circle cx="19" cy="20" r="15.300" fill="#f3f3f3"/><path d="M18 11v11l7 5" fill="none" stroke="#686868" stroke-width="2.800"/>
        <path d="M75 8l14 12-14 12v-7q-12 0-18 8 3-16 18-18z" fill="#f3f3f3"/>
        <circle cx="127" cy="20" r="15.300" fill="#f3f3f3"/><path d="M127 17v12M127 11v3" stroke="#686868" stroke-width="3"/>
      </svg>
    </div>
    <svg class="mark" viewBox="0 0 40 40">
      <rect x="2" y="2" width="36" height="36" fill="#c9c9c9" stroke="#ee3434" stroke-width="4"/>
      <text x="5.500" y="17.500" font-size="16" textLength="29" lengthAdjust="spacingAndGlyphs">CREATE</text>
      <text x="17" y="34" font-size="19" textLength="18" lengthAdjust="spacingAndGlyphs">FREE</text>
      <text transform="translate(14 34) rotate(-90)" font-size="11.500" textLength="14" lengthAdjust="spacingAndGlyphs">FOR</text>
    </svg>
    <div class="progress"><i class="p1"></i><i class="p2"><b></b></i><i class="p3"></i><i class="p4"></i></div>
    <div class="controls">
      <svg class="play" viewBox="0 0 90 30"><path d="M9 2v25l20-12.500z" fill="#fff"/><path d="M71 6v18l13-9zM86 6h3v18h-3z" fill="#fff"/></svg>
      <svg class="vol" viewBox="0 0 24 24"><path d="M3 8h5l7-7v22l-7-7H3zM17 6q3 6 0 12" fill="#f3f3f3" stroke="#f3f3f3"/></svg>
      <span class="time">1:43 / 4:09</span>
      <span class="chap">• Typography Canvas</span>
      <svg class="chev" viewBox="0 0 10 16"><path d="M2 2l5 6-5 6" fill="none" stroke="#fff" stroke-width="2"/></svg>
      <svg class="down" viewBox="0 0 12 10"><path d="M1 2l5 5 5-5" fill="none" stroke="#fff" stroke-width="2"/></svg>
      <svg class="right" viewBox="0 0 260 40">
        <rect x="1" y="13" width="40" height="15" rx="7.500" fill="#fff" opacity=".5"/><circle cx="30" cy="20" r="12" fill="#f3f3f3"/><path d="M27 15v10l8-5z" fill="#333"/>
        <rect x="63" y="10" width="27" height="20" rx="3" fill="#f3f3f3"/><path d="M67 20h6M76 20h10M67 25h11M81 25h5" stroke="#555" stroke-width="2.500"/>
        <g fill="#f3f3f3"><circle cx="130" cy="20" r="8.500"/><path d="M127 9h6l1 5h-8zM127 31h6l1-5h-8zM119 17l3-5 5 3-4 7zM141 17l-3-5-5 3 4 7zM119 23l3 5 5-3-4-7zM141 23l-3 5-5-3 4-7z"/></g><circle cx="130" cy="20" r="4" fill="#666"/>
        <path d="M171 16v-6h27v21h-10M171 21q11 0 11 11M171 26q6 0 6 6" fill="none" stroke="#f3f3f3" stroke-width="2.500"/><circle cx="172" cy="31" r="2" fill="#f3f3f3"/>
        <path d="M227 17h8V9M241 9v8h9M227 23h8v8M241 31v-8h9" fill="none" stroke="#f3f3f3" stroke-width="3"/>
      </svg>
    </div>
  </div>
</div>
<script src="palette.js"></script>
</body>
</html>
```

FILE: styles.css
```css
* { box-sizing: border-box; }
body { margin: 0; font-family: "Open Sans", "Noto Sans", sans-serif; color: #3c3c3c; overflow: hidden; }
.defs { display: block; height: 0; position: absolute; }
.screen { width: 1920px; height: 1080px; position: relative; overflow: hidden; }
.app { display: grid; grid-template-rows: 28px 31px 40px 43px 810px 35px 43px 50px; height: 1080px; background: #f6f6f4; }
svg { display: block; flex: none; }

.titlebar { background: #fefefe; display: flex; align-items: center; padding: 1px 23px 0 2px; font-size: 14.200px; color: #1b1b1b; }
.logo { width: 20px; height: 24px; margin-right: 4px; }
.doc { white-space: nowrap; }
.wins { margin-left: auto; display: flex; gap: 38px; }
.wins svg { width: 20px; height: 18px; }
.menu { background: #fefefe; display: flex; gap: 17.300px; align-items: center; padding: 2px 0 0 8px; font-size: 14px; letter-spacing: -.2px; color: #333; border-bottom: 1px solid #ddd; }

.bar { display: flex; align-items: center; }
.bar > svg { width: 37px; height: 20px; }
.bar1 { padding-left: 4.500px; }
.bar2 { padding-left: 3.500px; }
.sep { width: 13.800px; height: 38px; flex: none; background: linear-gradient(90deg, transparent 6px, #dcdcda 6px, #dcdcda 7.500px, transparent 7.500px); }
.dim { opacity: .5; }
.peach { fill: #f6d9c3; }
.lines { fill: none; stroke: #bdbdbd; stroke-width: 1.800; }
.wide { stroke-width: 3; }
.bar2 label { color: #a9a9a9; font-size: 15px; flex: none; }
.l1 { width: 18px; padding-left: 2px; }
.l2, .l3, .l4 { padding-left: 7px; }
.l2 { width: 21px; }
.l3 { width: 27px; }
.l4 { width: 25px; padding-left: 8px; }
.num { height: 35px; border: 1.500px solid #dadad8; border-radius: 6px; background: #f9f9f8; color: #a9a9a9; font-size: 14.500px; letter-spacing: -.4px; display: flex; align-items: center; padding-left: 3px; flex: none; }
.num svg { width: 32px; height: 20px; margin-left: auto; color: #cfcfcf; }
.n1 { width: 127px; }
.n2 { width: 121px; }
.n3 { width: 121px; }
.bar2 .tlock { width: 35px; height: 20px; margin-left: 2px; }
.unit { width: 66px; height: 35px; margin-left: 4px; border: 1.500px solid #d3d3d1; border-radius: 6px; display: flex; align-items: center; font-size: 15px; padding-left: 11px; color: #444; }
.tri { border: 6px solid transparent; border-top: 7px solid #333; border-bottom: 0; margin-left: 13px; }
.slim { width: 15px; }
.toggles { display: flex; gap: 1.500px; }
.toggles span { width: 35.500px; height: 35px; background: #d2cecd; border-radius: 5px; display: flex; align-items: center; justify-content: center; }
.toggles svg { width: 19px; height: 18px; }

.work { display: grid; grid-template: 27px 757px 26px / 53px 18px 1771px 18px 60px; min-height: 0; }
.tools { grid-area: 1 / 1 / 4 / 2; padding: 4px 0 0 4px; display: flex; flex-direction: column; }
.tools span, .snaps span { height: 34px; width: 43px; flex: none; display: flex; align-items: center; justify-content: center; }
.tools svg { width: 24px; height: 24px; margin-right: 2px; }
.tools i, .snaps i { flex: none; height: 14px; background: linear-gradient(#0000 7px, #dfdfdd 7px, #dfdfdd 8.500px, #0000 8.500px); }
.on { background: #d9d5d3; border-radius: 6px; }
.corner { grid-area: 1 / 2; border: 1px solid #dcdcdc; border-radius: 4px; margin: 2px 0 1px; display: flex; align-items: center; justify-content: center; background: #fafafa; }
.corner svg { width: 16px; height: 18px; margin: 0 1px 2px 0; }
.hruler { grid-area: 1 / 3; width: 1771px; height: 27px; }
.vruler { grid-area: 2 / 2; width: 18px; height: 757px; }
.tk { stroke: #777; fill: none; }
.rl { font-size: 12px; fill: #4e5a50; }
.mid { text-anchor: middle; }
.canvas { grid-area: 2 / 3; width: 1771px; height: 757px; background: #fff; }
.guides { stroke: #b9b8dc; stroke-width: 1.600; }
.dots { fill: #b8586a; }
.glabel { font: 9px "DejaVu Sans", sans-serif; fill: #8d87c8; }
.big { font: bold 61.500px "DejaVu Sans", sans-serif; fill: #000; }
.vend { grid-area: 1 / 4; display: flex; align-items: center; justify-content: center; background: #eee; border-radius: 4px 4px 0 0; }
.vend b { width: 15px; height: 18px; margin-bottom: 2px; border: 2px solid #c8c8c8; border-radius: 4px; background: #fafafa; }
.vscroll { grid-area: 2 / 4; background: #d0cdcd; display: flex; justify-content: center; padding-top: 172px; }
.vscroll b { width: 8px; height: 411px; border-radius: 4px; background: #7f8081; }
.hscroll { grid-area: 3 / 3; background: #d0cdcd; padding: 8px 3px; }
.hscroll b { display: block; height: 9px; border-radius: 5px; background: #7c7e80; }
.wheel { grid-area: 3 / 4; background: #f0f0f0; }
.wheel svg { width: 18px; height: 24px; }
.snaps { grid-area: 1 / 5 / 4 / 6; padding: 5px 4px 0 20px; display: flex; flex-direction: column; }
.snaps span { width: 36px; height: 35px; border-radius: 5px; }
.snaps span.on { box-shadow: inset 0 -1px #f6f6f4; }
.snaps svg { width: 17px; height: 17px; margin: 0 1px 2px 0; }
.faint svg { fill: none; stroke: #e0e0e0; stroke-width: 1.800; }

.palette { background: #cecccc; position: relative; padding-top: 1px; }
.swatches { display: flex; height: 19px; }
.swatches span { width: 19px; height: 19px; flex: none; }
.none { width: 20px; height: 19px; background: #e9e6e6; }
.pthumb { width: 425px; height: 9px; margin: 4px 0 0 4px; border-radius: 5px; background: #7e7e80; }
.pmenu { position: absolute; left: 1899px; top: 12px; border: 6px solid transparent; border-right: 6px solid #333; border-left: 0; }

.status { display: flex; align-items: center; font-size: 14.500px; color: #4a4a4a; padding-left: 2px; white-space: nowrap; background: #f3f3f1; }
.fs { display: grid; grid-template: 22px 20px / 44px 28px; column-gap: 27px; letter-spacing: -.3px; line-height: 26px; width: 154px; flex: none; align-self: start; }
.fs span:nth-child(odd) { text-align: right; }
.olab { width: 16px; flex: none; font-size: 15px; }
.box { height: 41px; border: 1.500px solid #d9d9d7; border-radius: 6px; display: flex; align-items: center; flex: none; padding-top: 1px; }
.box em { font-style: normal; }
.box svg { margin-left: auto; height: 18px; }
.obox { width: 67px; padding-left: 3px; color: #a5a5a5; letter-spacing: -.3px; }
.obox svg { width: 32px; color: #c9c9c9; }
.vsep { width: 1px; height: 40px; background: #ddd; margin: 0 10px 0 11px; }
.eye { width: 18px; height: 18px; }
.slock { width: 18px; height: 20px; margin: 0 10px 0 18px; }
.layer { width: 88px; padding-left: 11px; font-weight: bold; font-size: 12.800px; letter-spacing: -.3px; color: #333; }
.layer .tri { margin-left: 5px; border-width: 7px 5px 0; }
.msg { width: 1145px; height: 40px; font-size: 14.800px; fill: #4a4a4a; }
.xy { display: grid; grid-template: 22px 20px / 26px 50px; line-height: 26px; letter-spacing: -.3px; align-self: start; width: 90px; padding-left: 10px; flex: none; }
.zlab { width: 22px; flex: none; font-size: 15px; }
.zbox { width: 99px; padding-left: 12px; margin-left: 0; letter-spacing: -.3px; }
.zbox svg, .rbox svg { width: 38px; margin-right: 3px; color: #333; }
.rlab { width: 23px; margin-left: 11px; flex: none; }
.rbox { width: 107px; padding-left: 15px; letter-spacing: -.3px; }

.taskbar { background: linear-gradient(90deg, #e4cbd1 0, #e4cbd1 480px, #e8cfc6 800px, #e2cdc5 1100px, #e0c8c8 1300px, #d9c8cd 1470px, #c3dfe4 1540px, #bfdfe4 1760px, #d3dde0 1780px, #dadfe2 1920px); }
.srch { font-size: 17.500px; fill: #333; }
.badge { font: 500 15px Roboto, sans-serif; text-anchor: middle; fill: #111; }
.ff { font: italic bold 21px "Liberation Serif", serif; text-anchor: middle; fill: #333; }
.q { font: bold 19px "Open Sans", sans-serif; text-anchor: middle; fill: #fff; }
.temp { font-size: 18px; fill: #222; }

.shade-top { position: absolute; inset: 0 0 auto; height: 200px; background: linear-gradient(rgba(0,0,0,.69) 0, rgba(0,0,0,.61) 15px, rgba(0,0,0,.49) 32px, rgba(0,0,0,.36) 55px, rgba(0,0,0,.26) 62px, rgba(0,0,0,.19) 74px, rgba(0,0,0,.11) 88px, rgba(0,0,0,.06) 103px, rgba(0,0,0,.02) 125px, transparent 150px); }
.shade-bottom { position: absolute; inset: 650px 0 0; background: linear-gradient(transparent 0, rgba(0,0,0,.03) 40px, rgba(0,0,0,.09) 95px, rgba(0,0,0,.14) 160px, rgba(0,0,0,.2) 250px, rgba(0,0,0,.24) 310px, rgba(0,0,0,.27) 350px, rgba(0,0,0,.31) 380px, rgba(0,0,0,.42) 398px, rgba(0,0,0,.56) 415px, rgba(0,0,0,.68) 430px); }

.player { position: absolute; inset: 0; display: flex; flex-direction: column; color: #eee; font-family: Roboto, sans-serif; }
.ptop { display: flex; justify-content: space-between; align-items: flex-start; height: 56px; padding: 16px 15px 0 18px; }
h1 { margin: 1px 0 0; font-size: 27px; line-height: 36px; font-weight: 400; text-shadow: 0 0 2px rgba(0,0,0,.5); white-space: nowrap; }
.acts { width: 150px; height: 40px; }
.mark { margin: 914px 23px 0 auto; width: 40px; height: 40px; font-family: "Liberation Sans", sans-serif; font-weight: bold; fill: #222; }
.progress { display: flex; gap: 3px; height: 5px; width: 1871px; margin: 11px 0 0 24px; flex: none; }
.progress i { background: rgba(255,255,255,.6); display: block; }
.p1 { width: 165px; }
.progress .p1, .p2 b { background: #f00; }
.p2 { width: 718px; }
.p2 b { display: block; width: 611px; height: 5px; }
.p3 { width: 673px; }
.p4 { width: 306px; }
.controls { display: flex; align-items: center; height: 54px; padding-left: 40px; font-size: 20px; text-shadow: 0 0 2px rgba(0,0,0,.5); white-space: nowrap; }
.play { width: 90px; height: 30px; }
.vol { width: 24px; height: 24px; margin-left: 28px; }
.time { width: 103px; margin-left: 24px; }
.chap { width: 192px; }
.chev { width: 10px; height: 14px; }
.down { width: 12px; height: 10px; margin: -7px 0 0 443px; }
.right { width: 260px; height: 40px; margin-left: 664px; }
```

FILE: palette.js
```js
const colours = `000 1a1a1a 333 4d4d4d 666 808080 999 b3b3b3 ccc e6e6e6 ececec f2f2f2 f9f9f9 fff
800000 f00 808000 ff0 008000 0f0 008080 0ff 000080 00f 800080 f0f
2b0000 550000 800000 a00 d40000 f00 ff2a2a f55 ff8080 faa ffd5d5
280b0b 501616 782121 a02c2c c83737 d35f5f de8787 e9afaf f4d7d7
241c1c 483737 6c5353 916f6f ac9393 c8b7b7 e3dbdb
2b1100 520 803300 a40 d45500 f60 ff7f2a f95 ffb380 fca ffe6d5
28170b 502d16 784421 a05a2c c87137 d38d5f deaa87 e9c6af f4e3d7
241f1c 483e37 6c5d53 917c6f ac9d93 c8beb7 e3dedb
2b2200 540 806600 a80 d4aa00 fc0 ffd42a fd5 ffe680 fea fff6d5
28220b 504416 786721 a0892c c8ab37 d3bc5f decd87`.split(/\s+/);
const strip = document.getElementById('swatches');
for (const c of colours) {
  const s = document.createElement('span');
  s.style.background = '#' + c;
  strip.append(s);
}
```
